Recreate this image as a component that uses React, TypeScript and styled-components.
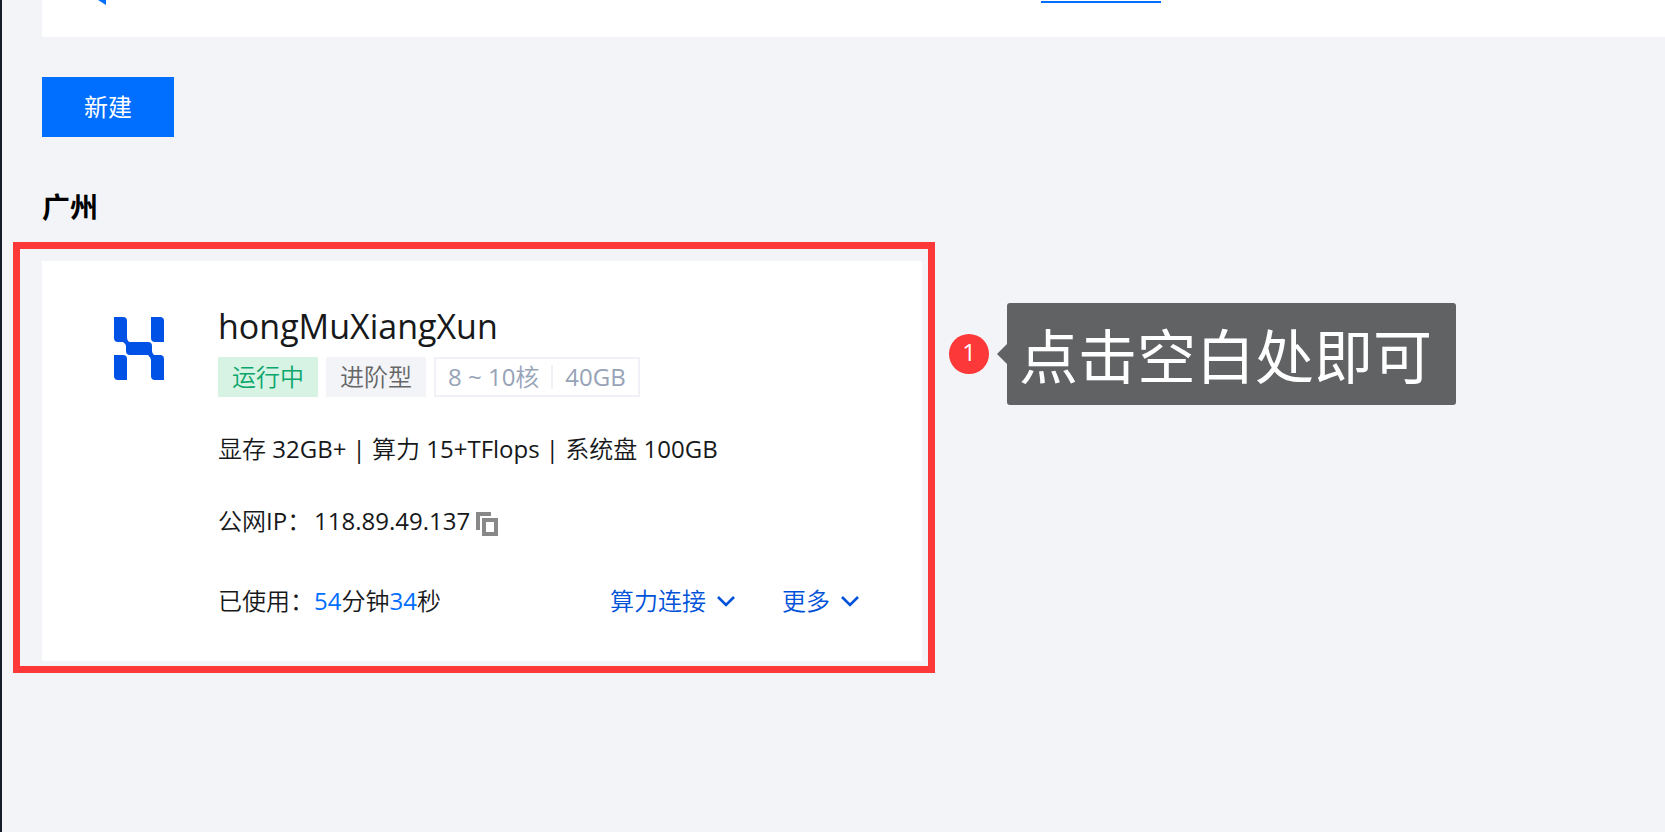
import React from "react";
import styled, { createGlobalStyle } from "styled-components";

const regular = `"Open Sans", "Noto Sans CJK SC", sans-serif`;

const GlobalStyle = createGlobalStyle`
  *, *::before, *::after { box-sizing: border-box; }
  body {
    margin: 0;
    background: #f2f4f8;
    color: #16181a;
    font-family: "Open Sans", "Noto Sans CJK SC DemiLight", "Noto Sans CJK SC", sans-serif;
    font-size: 24px;
    line-height: 40px;
  }
  button { font: inherit; border: 0; cursor: pointer; }
`;

const Page = styled.div`
  min-height: 100vh;
  padding-left: 40px;
  border-left: 2px solid #161c2b;
  overflow-x: hidden;
`;

const Banner = styled.header`
  display: flex;
  align-items: flex-start;
  height: 37px;
  padding-left: 56px;
  background: #fff;
`;

const BannerLink = styled.a`
  width: 120px;
  height: 3px;
  margin-left: 935px;
  border-bottom: 2px solid #006eff;
`;

const CreateButton = styled.button`
  display: block;
  width: 132px;
  height: 60px;
  margin-top: 40px;
  padding: 0;
  background: #006eff;
  color: #fff;
  font-family: ${regular};
`;

const Region = styled.h2`
  margin: 50px 0 34px;
  font-family: ${regular};
  font-size: 28px;
  line-height: 40px;
  font-weight: 700;
  color: #000;
`;

const CardArea = styled.section`
  position: relative;
  width: 880px;
`;

const Card = styled.article`
  display: flex;
  gap: 54px;
  min-height: 400px;
  padding: 40px 62px 40px 72px;
  background: #fff;
`;

const Logo = styled.svg`
  flex: none;
  width: 50px;
  height: 64px;
  margin-top: 16px;
`;

const Details = styled.div`
  flex: 1;
`;

const Name = styled.h3`
  margin: 0 0 6px;
  font-size: 34px;
  line-height: 50px;
  font-weight: 400;
`;

const Tags = styled.div`
  display: flex;
  gap: 8px;
`;

const Tag = styled.span<{ $tone: "green" | "gray" }>`
  padding: 0 14px;
  background: ${(p) => (p.$tone === "green" ? "#d6f3e4" : "#f2f4f8")};
  color: ${(p) => (p.$tone === "green" ? "#0aa66b" : "#666")};
`;

const SpecTag = styled.span`
  display: flex;
  align-items: center;
  height: 40px;
  padding: 0 12px;
  border: 2px solid #eff1f6;
  color: #97a3b7;
  white-space: nowrap;
`;

const Divider = styled.i`
  width: 2px;
  height: 24px;
  margin: 0 12px;
  background: #eff1f6;
`;

const Line = styled.p<{ $gap: number }>`
  display: flex;
  align-items: center;
  margin: ${(p) => p.$gap}px 0 0;
  white-space: pre;
`;

const Label = styled.span`
  width: 96px;
`;

const Amount = styled.span`
  color: #006eff;
`;

const CopyButton = styled.button`
  display: flex;
  margin: 6px 0 0 6px;
  padding: 0;
  background: none;
`;

const Actions = styled.span`
  display: flex;
  gap: 46px;
  margin-left: auto;
`;

const Action = styled.button`
  display: flex;
  align-items: center;
  gap: 10px;
  padding: 0;
  background: none;
  color: #0052d9;
`;

const Highlight = styled.div`
  position: absolute;
  inset: -19px -13px -12px -29px;
  border: 7px solid #fc3838;
  pointer-events: none;
`;

const Callout = styled.div`
  position: absolute;
  top: 42px;
  left: calc(100% + 27px);
  display: flex;
  align-items: center;
  color: #fff;
  font-family: ${regular};
`;

const Step = styled.span`
  width: 40px;
  height: 40px;
  border-radius: 50%;
  background: #fc3838;
  line-height: 36px;
  text-align: center;
`;

const Arrow = styled.i`
  margin-left: 8px;
  border: solid transparent;
  border-width: 10px 10px 10px 0;
  border-right-color: #616264;
`;

const Tip = styled.span`
  width: 449px;
  height: 102px;
  padding-left: 12px;
  border-radius: 3px;
  background: #616264;
  font-size: 59px;
  line-height: 106px;
  white-space: nowrap;
`;

const Chevron = () => (
  <svg width="20" height="20" viewBox="0 0 20 20" fill="none" stroke="#0052d9" strokeWidth="2.6" aria-hidden="true">
    <path d="M2 6l8 8 8-8" />
  </svg>
);

export default function App() {
  return (
    <Page>
      <GlobalStyle />
      <Banner>
        <svg width="8" height="5" viewBox="0 0 8 5" aria-hidden="true">
          <path d="M0 0h8v5z" fill="#006eff" />
        </svg>
        <BannerLink href="#" aria-label="公告" />
      </Banner>
      <main>
        <CreateButton type="button">新建</CreateButton>
        <Region>广州</Region>
        <CardArea>
          <Card>
            <Logo viewBox="0 0 50 64" fill="#0052e6" aria-hidden="true">
              <path d="M0 0h9q4 0 4 4v17q0 2 2 4h19q4 0 4 4v5q0 2 2 4h6q4 0 4 4v21h-9q-4 0-4-4V43q0-2-3-5H16q-4 0-4-4v-5q0-2-3-4H4q-4 0-4-4z" />
              <path d="M37 0h9q4 0 4 4v21h-9q-4 0-4-4z" />
              <path d="M0 38h9q4 0 4 4v21H4q-4 0-4-4z" />
            </Logo>
            <Details>
              <Name>hongMuXiangXun</Name>
              <Tags>
                <Tag $tone="green">运行中</Tag>
                <Tag $tone="gray">进阶型</Tag>
                <SpecTag>
                  8 ~ 10核
                  <Divider />
                  40GB
                </SpecTag>
              </Tags>
              <Line $gap={32}>显存 32GB+ | 算力 15+TFlops | 系统盘 100GB</Line>
              <Line $gap={32}>
                <Label>公网IP：</Label>118.89.49.137
                <CopyButton type="button" aria-label="复制">
                  <svg width="22" height="24" viewBox="0 0 22 24" fill="none" stroke="#888" strokeWidth="4" aria-hidden="true">
                    <path d="M2 18V2h13" />
                    <path d="M8 8h12v14H8z" />
                  </svg>
                </CopyButton>
              </Line>
              <Line $gap={40}>
                <Label>已使用：</Label><Amount>54</Amount>分钟<Amount>34</Amount>秒
                <Actions>
                  <Action type="button">算力连接<Chevron /></Action>
                  <Action type="button">更多<Chevron /></Action>
                </Actions>
              </Line>
            </Details>
          </Card>
          <Highlight />
          <Callout>
            <Step>1</Step>
            <Arrow />
            <Tip>点击空白处即可</Tip>
          </Callout>
        </CardArea>
      </main>
    </Page>
  );
}
